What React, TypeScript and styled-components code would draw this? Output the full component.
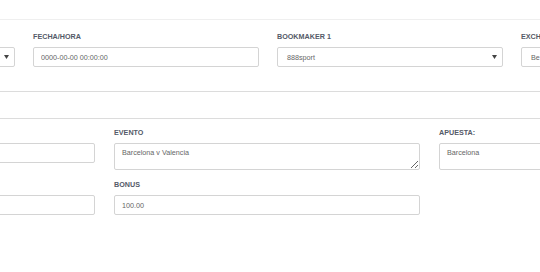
import React from 'react';
import styled, {createGlobalStyle} from "styled-components";

const GlobalStyle = createGlobalStyle`
  html, body {
    margin: 0;
    padding: 0;
    background: #fff;
    overflow: hidden;
  }

  body {
    font-family: "Liberation Sans", Arial, sans-serif;
  }
`

// the page is scrolled sideways, so the first column sits mostly off-screen
const Page = styled.div`
  width: 1000px;
  margin-left: -211px;
`

const TopBar = styled.div`
  height: 19px;
  border-bottom: 1px solid #efefef;
`

const Panel = styled.div<{ $top: number, $bottom: number, $ruled?: boolean }>`
  padding: ${p => p.$top}px 0 ${p => p.$bottom}px 0;
  border-bottom: ${p => p.$ruled ? '1px solid #dcdcdc' : 'none'};
`

const Spacer = styled.div`
  height: 26px;
  border-bottom: 1px solid #dcdcdc;
`

const Grid = styled.div<{ $col: number, $gap: number }>`
  display: grid;
  grid-template-columns: repeat(4, ${p => p.$col}px);
  column-gap: ${p => p.$gap}px;
  row-gap: 10px;
  align-items: start;
`

const Field = styled.div`
  display: flex;
  flex-direction: column;
`

const Label = styled.label`
  font-size: 7.2px;
  line-height: 9px;
  font-weight: 700;
  color: #545a68;
  margin-bottom: 6px;
  height: 9px;
  white-space: nowrap;
`

const Input = styled.input`
  box-sizing: border-box;
  height: 20px;
  width: 100%;
  margin: 0;
  padding: 0 7px;
  border: 1px solid #d4d4d4;
  border-radius: 2px;
  font-family: "Liberation Sans", Arial, sans-serif;
  font-size: 7.2px;
  color: #666;
  background: #fff;
  outline: none;
`

const TextArea = styled.textarea`
  box-sizing: border-box;
  height: 27px;
  width: 100%;
  margin: 0;
  padding: 4px 7px;
  border: 1px solid #d4d4d4;
  border-radius: 2px;
  font-family: "Liberation Sans", Arial, sans-serif;
  font-size: 7.2px;
  line-height: 9px;
  color: #666;
  background: #fff;
  outline: none;
  resize: vertical;
  overflow: hidden;
`

const SelectBox = styled.div`
  box-sizing: border-box;
  height: 20px;
  display: flex;
  align-items: center;
  justify-content: space-between;
  padding: 0 5px 0 9px;
  border: 1px solid #d4d4d4;
  border-radius: 2px;
  font-size: 7.2px;
  color: #666;
  white-space: nowrap;
`

const Arrow = () => (
  <svg width="5" height="4" viewBox="0 0 5 4">
    <path d="M0 0 L5 0 L2.5 4 Z" fill="#444"/>
  </svg>
)

const Select: React.FC<{ value?: string }> = ({value}) => (
  <SelectBox>
    <span>{value}</span>
    <Arrow/>
  </SelectBox>
)

const App: React.FC = () => {
  return (
    <>
      <GlobalStyle/>
      <Page>
        <TopBar/>
        <Panel $top={12} $bottom={24} $ruled>
          <Grid $col={226} $gap={18}>
            <Field>
              <Label/>
              <Select/>
            </Field>
            <Field>
              <Label>FECHA/HORA</Label>
              <Input defaultValue="0000-00-00 00:00:00"/>
            </Field>
            <Field>
              <Label>BOOKMAKER 1</Label>
              <Select value="888sport"/>
            </Field>
            <Field>
              <Label>EXCH</Label>
              <Select value="Be"/>
            </Field>
          </Grid>
        </Panel>
        <Spacer/>
        <Panel $top={9} $bottom={40}>
          <Grid $col={306} $gap={19}>
            <Field>
              <Label/>
              <Input defaultValue=""/>
            </Field>
            <Field>
              <Label>EVENTO</Label>
              <TextArea defaultValue="Barcelona v Valencia"/>
            </Field>
            <Field>
              <Label>APUESTA:</Label>
              <TextArea defaultValue="Barcelona"/>
            </Field>
            <Field/>
            <Field>
              <Label/>
              <Input defaultValue=""/>
            </Field>
            <Field>
              <Label>BONUS</Label>
              <Input defaultValue="100.00"/>
            </Field>
          </Grid>
        </Panel>
      </Page>
    </>
  );
};

export default App;
